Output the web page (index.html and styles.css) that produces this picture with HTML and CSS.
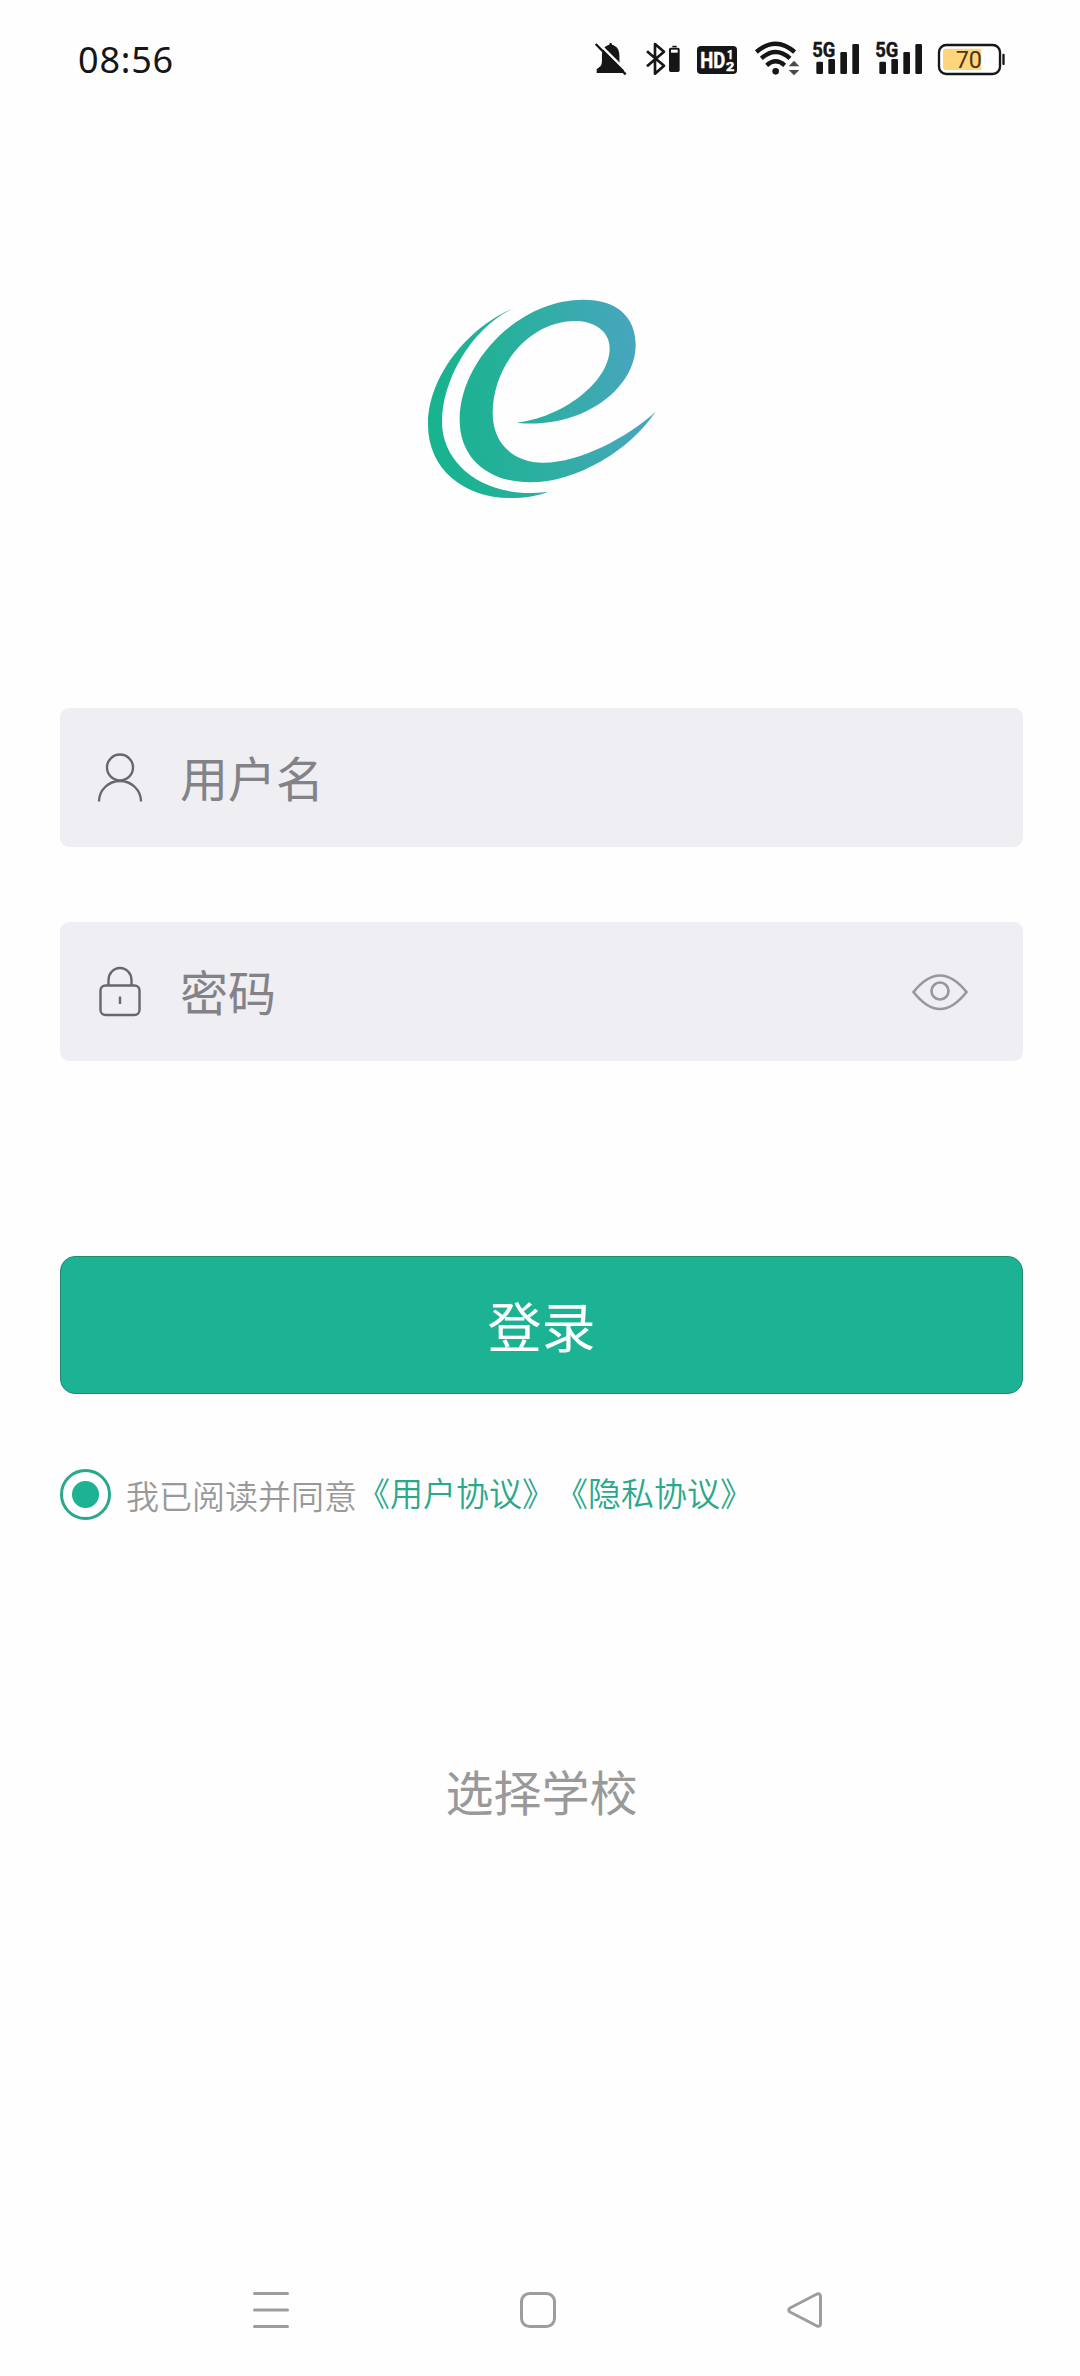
FILE: index.html
```
<!DOCTYPE html>
<html lang="zh-CN">
<head>
    <meta charset="UTF-8">
    <meta name="viewport" content="width=device-width, initial-scale=1.0">
    <title>登录</title>
    <link rel="stylesheet" href="styles.css">
</head>
<body>
    <!-- Status bar -->
    <header class="status-bar">
        <span class="time">08:56</span>
        <div class="status-icons">
            <svg width="38" height="60" viewBox="39 0 114 180">
                <path d="M62 108c6-8 3-20 4-36 1-16 9-25 22-28q0-6 4-6t4 6c14 4 22 14 22 30 1 16-1 26 4 32l10 10v13H50v-11zM82 120h21q-2 9-10 9t-11-9z" fill="#161616"/>
                <path d="M53 37l91 91" stroke="#fff" stroke-width="7"/>
                <path d="M47 42l90 91" stroke="#161616" stroke-width="7"/>
            </svg>
            <svg width="40" height="60" viewBox="189 0 120 180">
                <path d="M201 64l51 43-27 24V42l27 23-51 44" fill="none" stroke="#161616" stroke-width="8" stroke-linejoin="round"/>
                <path d="M277 47h13v5h-13zM272 53h22q5 0 5 5v63q0 5-5 5h-22q-5 0-5-5V58q0-5 5-5z" fill="#161616"/>
                <path d="M273 59h20v9h-20z" fill="#fff"/>
            </svg>
            <svg width="46" height="60" viewBox="345 0 138 180">
                <rect x="351" y="48" width="120" height="84" rx="12" fill="#161616"/>
                <text class="icon-text" x="361" y="114" font-size="67" textLength="75" lengthAdjust="spacingAndGlyphs" fill="#fff" stroke="#fff">HD</text>
                <text class="icon-text" x="441" y="87" font-size="38" textLength="19" lengthAdjust="spacingAndGlyphs" fill="#fff" stroke="#fff">1</text>
                <text class="icon-text" x="438" y="122" font-size="40" textLength="25" lengthAdjust="spacingAndGlyphs" fill="#fff" stroke="#fff">2</text>
            </svg>
            <svg width="47" height="60" viewBox="519 0 141 180">
                <g fill="none" stroke="#161616" stroke-width="13">
                    <path d="M529 66q58-50 115 0M544 85q43-38 86 0M560 106q27-24 54 0"/>
                </g>
                <circle cx="587" cy="124" r="10" fill="#161616"/>
                <path d="M626 109l16-17 16 17zM626 120l16 16 16-16z" fill="#4a4a4a"/>
            </svg>
            <svg width="49" height="60" viewBox="36 0 147 180">
                <g fill="#161616">
                    <text class="icon-text" x="37" y="81" font-size="62" textLength="69" lengthAdjust="spacingAndGlyphs" stroke="#161616">5G</text>
                    <rect x="49" y="95" width="20" height="37" rx="4"/>
                    <rect x="85" y="87" width="20" height="45" rx="4"/>
                    <rect x="121" y="66" width="20" height="66" rx="4"/>
                    <rect x="157" y="42" width="20" height="90" rx="4"/>
                </g>
            </svg>
            <svg width="52" height="60" viewBox="30 0 156 180">
                <g fill="#161616">
                    <text class="icon-text" x="37" y="81" font-size="62" textLength="69" lengthAdjust="spacingAndGlyphs" stroke="#161616">5G</text>
                    <rect x="49" y="95" width="20" height="37" rx="4"/>
                    <rect x="85" y="87" width="20" height="45" rx="4"/>
                    <rect x="121" y="66" width="20" height="66" rx="4"/>
                    <rect x="157" y="42" width="20" height="90" rx="4"/>
                </g>
            </svg>
            <svg width="69" height="60" viewBox="411 0 207 180">
                <rect x="417" y="45" width="183" height="87" rx="22" fill="#fff" stroke="#161616" stroke-width="7"/>
                <path d="M438 56h106v64H438q-9 0-9-9V65q0-9 9-9z" fill="#ffd57c"/>
                <rect x="607" y="71" width="7" height="34" rx="3" fill="#161616"/>
                <text class="battery-text" x="467" y="114" font-size="71" textLength="79" lengthAdjust="spacingAndGlyphs">70</text>
            </svg>
        </div>
    </header>

    <main class="login-page">
        <svg class="logo" width="260" height="230" viewBox="0 0 780 690">
            <defs>
                <linearGradient id="logo-color" gradientUnits="userSpaceOnUse" x1="80" y1="400" x2="720" y2="330">
                    <stop offset="0" stop-color="#18b38f"/>
                    <stop offset="0.35" stop-color="#27b09b"/>
                    <stop offset="1" stop-color="#4aa5c0"/>
                </linearGradient>
            </defs>
            <g fill="url(#logo-color)">
                <path d="M306 87C180 140 54 285 54 435C54 565 160 654 300 654C345 654 385 647 414 635C235 660 96 560 96 425C96 300 185 145 306 87Z"/>
                <path d="M320 428C450 415 599 310 599 205C599 155 555 123 495 123C360 123 248 255 248 400C248 490 310 548 400 548C510 548 655 470 737 395C660 510 500 607 360 607C235 607 149 535 149 420C149 245 325 59 520 59C620 59 677 110 677 195C677 330 510 450 320 428Z"/>
            </g>
        </svg>

        <form class="login-form" onsubmit="event.preventDefault();">
            <div class="field">
                <svg class="field-icon" width="50" height="60" viewBox="0 0 50 60">
                    <circle cx="25" cy="19.5" r="13"/>
                    <path d="M4 53.500a21 20.500 0 0 1 42 0"/>
                </svg>
                <input type="text" name="username" placeholder="用户名">
            </div>
            <div class="field">
                <svg class="field-icon" width="50" height="60" viewBox="0 0 50 60">
                    <rect x="5.500" y="23.500" width="39" height="29.500" rx="5"/>
                    <path d="M13.500 23.500v-5.500a11.500 12 0 0 1 23 0v5.500M25 34.500v7.500"/>
                </svg>
                <input type="password" name="password" placeholder="密码">
                <svg class="eye-icon" width="56" height="40" viewBox="0 0 56 40">
                    <path d="M1.500 20Q28-13 54.500 20Q28 54 1.500 20Z"/>
                    <circle cx="28" cy="19" r="8.500"/>
                </svg>
            </div>
            <button type="submit" class="login-button">登录</button>
            <div class="agreement">
                <span class="radio"></span>
                <span class="agree-text">我已阅读并同意</span>
                <div class="links">
                    <a href="#">《用户协议》</a>
                    <a href="#">《隐私协议》</a>
                </div>
            </div>
        </form>
        <a class="school" href="#">选择学校</a>
    </main>

    <!-- System navigation -->
    <nav class="nav-bar">
        <svg width="40" height="40" viewBox="0 0 40 40">
            <path d="M3.500 3.500h33M3.500 20h33M3.500 36.500h33"/>
        </svg>
        <svg width="40" height="40" viewBox="0 0 40 40">
            <rect x="3.500" y="3.500" width="33" height="33" rx="8"/>
        </svg>
        <svg width="40" height="40" viewBox="0 0 40 40">
            <path d="M32 4L5 18q-2.500 2 0 4l27 14q3.500 1 3.500-2.500v-27Q35.500 3 32 4z"/>
        </svg>
    </nav>
</body>
</html>
```

FILE: styles.css
```
* {
    box-sizing: border-box;
}

body {
    margin: 0;
    height: 2376px;
    display: flex;
    flex-direction: column;
    background-color: #fefefe;
    font-family: "Noto Sans CJK SC", sans-serif;
}

a {
    color: inherit;
    text-decoration: none;
}

.status-bar {
    display: flex;
    justify-content: space-between;
    height: 120px;
    padding: 30px 74px 30px 78px;
}

.time {
    font-family: "Noto Sans", sans-serif;
    font-size: 36px;
    line-height: 60px;
    letter-spacing: 0.8px;
    color: #161616;
}

.status-icons {
    display: flex;
    gap: 12px;
}

.icon-text {
    font-family: Roboto, sans-serif;
    font-weight: bold;
    stroke-width: 1.5;
}

.battery-text {
    font-family: Roboto, sans-serif;
    fill: #4b3516;
}

.login-page {
    flex: 1;
    display: flex;
    flex-direction: column;
    align-items: center;
    padding: 160px 57px 0 60px;
}

.logo {
    margin: 0 3px 198px 0;
}

.login-form {
    width: 100%;
}

.field {
    display: flex;
    align-items: center;
    height: 139px;
    margin-bottom: 75px;
    padding: 0 55px 0 35px;
    border-radius: 9px;
    background-color: #efeef3;
}

.field-icon {
    fill: none;
    stroke: #68676b;
    stroke-width: 2.4;
}

.eye-icon {
    fill: none;
    stroke: #98979b;
    stroke-width: 2.6;
}

.field input {
    flex: 1;
    min-width: 0;
    height: 100%;
    margin-left: 35px;
    padding: 0 0 4px;
    border: none;
    outline: none;
    background: transparent;
    font-family: inherit;
    font-size: 48px;
}

.field input::placeholder {
    color: #838287;
}

.login-button {
    display: block;
    width: 100%;
    height: 138px;
    margin-top: 195px;
    padding: 0 0 2px;
    border: 1px solid #23896f;
    border-radius: 15px;
    background-color: #1bb394;
    color: #fff;
    font-family: inherit;
    font-size: 54px;
}

.agreement {
    display: flex;
    align-items: center;
    height: 51px;
    margin-top: 75px;
    font-size: 33px;
    line-height: 50px;
    white-space: nowrap;
}

.radio {
    width: 51px;
    height: 51px;
    border: 3px solid #2aa88b;
    border-radius: 50%;
    background: radial-gradient(circle, #1bb394 13px, #fff 14px);
}

.agree-text {
    margin-left: 15px;
    padding-top: 1px;
    color: #999;
    font-weight: 350;
}

.links {
    display: flex;
    padding-bottom: 6px;
    color: #2aa88b;
    font-weight: 350;
    text-spacing-trim: space-all;
}

.school {
    margin-top: 234px;
    color: #999;
    font-size: 48px;
    line-height: 72px;
}

.nav-bar {
    display: flex;
    justify-content: space-between;
    height: 86px;
    padding: 0 255px 0 251px;
}

.nav-bar svg {
    fill: none;
    stroke: #9d9d9d;
    stroke-width: 3;
    stroke-linecap: round;
    stroke-linejoin: round;
}
```
